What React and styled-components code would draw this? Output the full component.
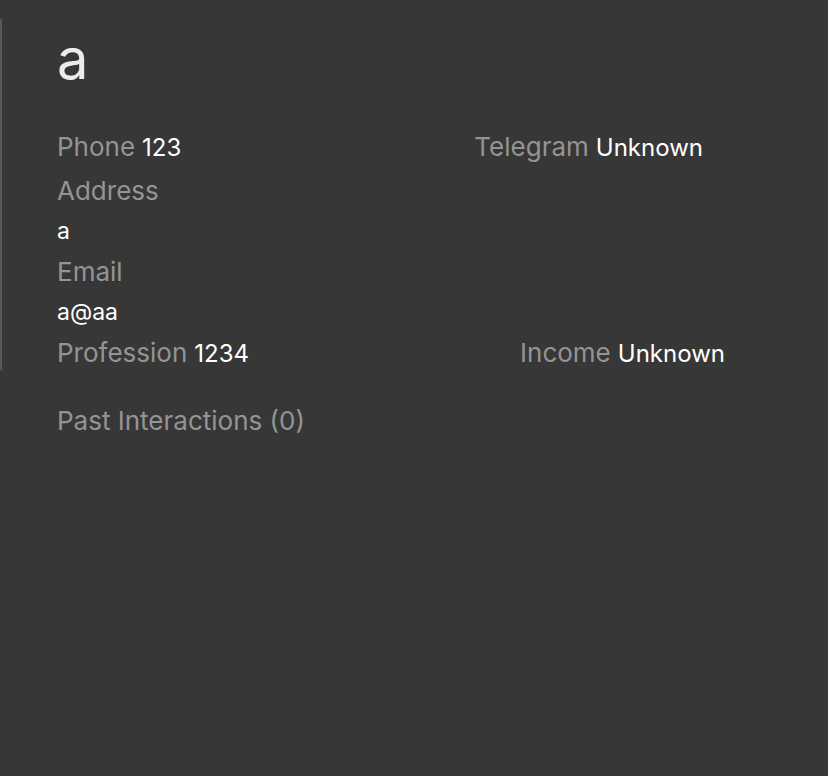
import React from "react";
import styled, { createGlobalStyle } from "styled-components";

const Global = createGlobalStyle`
  html, body { margin: 0; padding: 0; background: #373737; overflow: hidden; }
  body { font-family: Inter, "Noto Sans", sans-serif; -webkit-font-smoothing: antialiased; }
`;

const Page = styled.div`
  width: 828px;
  height: 776px;
  background: #373737;
  padding-top: 18px;
  box-sizing: border-box;
`;

const Card = styled.div`
  border-left: 2px solid #5a5a5a;
  border-top-left-radius: 3px;
  border-bottom-left-radius: 3px;
  padding-left: 55px;
  height: 353px;
  box-sizing: border-box;
`;

const Name = styled.h1`
  margin: 0;
  padding-top: 11px;
  font-size: 56px;
  font-weight: 400;
  line-height: 60px;
  color: #ececec;
`;

const Details = styled.div`
  margin-top: 37px;
  display: flex;
  flex-direction: column;
`;

const Row = styled.div`
  display: flex;
  align-items: baseline;
  height: ${(p) => p.$h || 41}px;
`;

const Field = styled.div`
  flex: ${(p) => (p.$grow ? 1 : "none")};
  text-align: ${(p) => (p.$grow ? "center" : "left")};
  padding-left: ${(p) => (p.$grow ? "168px" : "0")};
  white-space: nowrap;
`;

const Label = styled.span`
  font-size: 26px;
  line-height: 41px;
  color: #949494;
  margin-right: 7px;
`;

const Value = styled.span`
  font-size: 24px;
  line-height: 41px;
  color: #ffffff;
`;

const BlockValue = styled.div`
  font-size: 23px;
  line-height: 40px;
  height: 40px;
  color: #ffffff;
`;

const Section = styled.div`
  padding-left: 57px;
  margin-top: 30px;
`;

const SectionTitle = styled.div`
  font-size: 26px;
  line-height: 40px;
  color: #949494;
`;

export default function App() {
  return (
    <Page>
      <Global />
      <Card>
        <Name>a</Name>
        <Details>
          <Row $h={44}>
            <Field>
              <Label>Phone</Label>
              <Value>123</Value>
            </Field>
            <Field $grow>
              <Label>Telegram</Label>
              <Value>Unknown</Value>
            </Field>
          </Row>
          <Row>
            <Field>
              <Label>Address</Label>
            </Field>
          </Row>
          <BlockValue>a</BlockValue>
          <Row>
            <Field>
              <Label>Email</Label>
            </Field>
          </Row>
          <BlockValue>a@aa</BlockValue>
          <Row>
            <Field>
              <Label>Profession</Label>
              <Value>1234</Value>
            </Field>
            <Field $grow>
              <Label>Income</Label>
              <Value>Unknown</Value>
            </Field>
          </Row>
        </Details>
      </Card>
      <Section>
        <SectionTitle>Past Interactions (0)</SectionTitle>
      </Section>
    </Page>
  );
}
